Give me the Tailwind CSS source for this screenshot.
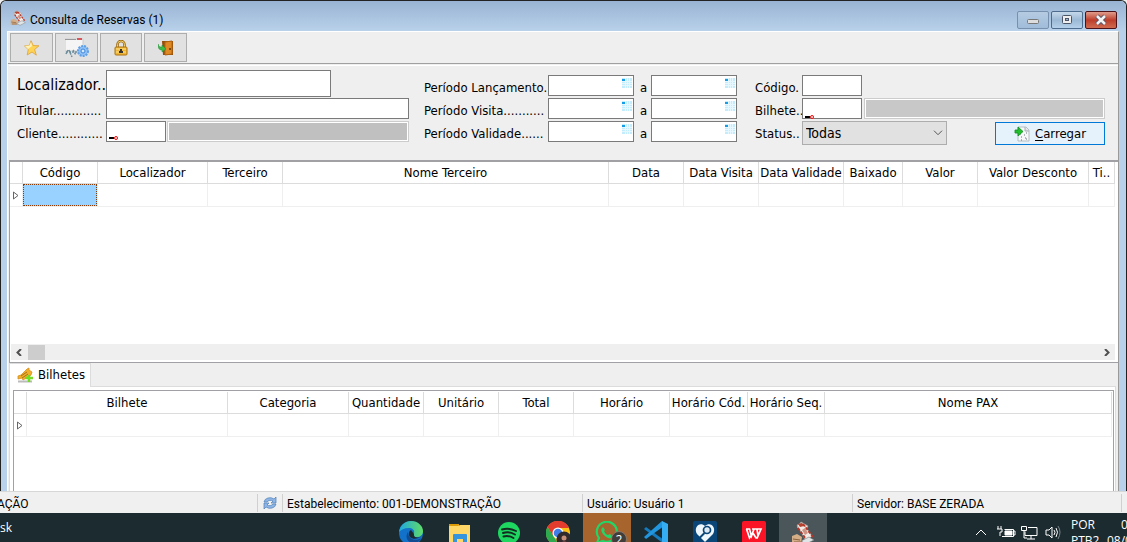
<!DOCTYPE html>
<html lang="pt-BR">
<head>
<meta charset="utf-8">
<title>Consulta de Reservas</title>
<script src="https://cdn.jsdelivr.net/npm/@tailwindcss/browser@4"></script>
</head>
<body class="flex h-screen flex-col overflow-hidden bg-[#efefef] font-['DejaVu_Sans_Condensed','DejaVu_Sans',sans-serif] text-[13px] text-black">
<svg class="hidden">
  <symbol id="cal" viewBox="0 0 10 10"><path d="M0 0h10v10H0z" fill="#c3ecfc"/><path d="M0 3.500h10M0 5.500h10M0 7.500h10M3.500 0v10M5.500 0v10M7.500 0v10" stroke="#e6f8fe" stroke-width="1"/><path d="M0 1h3v2H0z" fill="#149de8"/></symbol>
  <symbol id="tickets" viewBox="0 0 24 24"><path d="m6 6 4-5 7 4-4 8z" fill="#eee2d8" stroke="#a79a95" stroke-width=".6"/><path d="m6 4 6-2 9 13-6 5z" fill="#f1ece7" stroke="#a99790" stroke-width=".7"/><path d="m7 3 4-1 2 3-4 1z" fill="#b5422f"/><path d="m12 3 10 13M7 7l8 11" stroke="#b83426" stroke-width="1.800" stroke-dasharray="3 1.500"/><path d="m11 9 3-2 3 5-3 2z" fill="#ce9282"/><path d="m1 15 5-2 5 3-1 6H1z" fill="#d3ae86"/><path d="m2 18 7 1M3 21h8" stroke="#8d6041"/><path d="m10 20 8-4 5 3-8 4z" fill="#dfe4e5" stroke="#7b7776" stroke-width=".6"/></symbol>
  <symbol id="marker" viewBox="0 0 6 9"><path d="M.5 1v7L5 4.500z" fill="white" stroke="#666"/></symbol>
</svg>

<main class="flex min-h-0 flex-1 flex-col rounded-t-md border-x border-t border-[#222] bg-[#b9d1ea] pl-[6px] pr-[7px]">
  <header class="-mr-[7px] -ml-[6px] flex h-[30px] shrink-0 items-center rounded-t-md bg-linear-to-b from-[#98b3d3] to-[#b9d1ea] px-[9px]">
    <svg class="mt-1 size-4"><use href="#tickets"/></svg>
    <h1 class="ml-1 mt-2 flex-1 font-['Roboto'] text-[12px]">Consulta de Reservas (1)</h1>
    <div class="mt-2 flex gap-[2px]">
      <button aria-label="Minimizar" class="flex h-[18px] w-8 items-center justify-center rounded-xs border border-[#7790ad] bg-linear-to-b from-[#b5cbe2] to-[#a0bcd9]"><svg class="h-3 w-3" viewBox="0 0 12 12"><rect x=".5" y="5.500" width="11" height="4" rx="1" fill="#ddd" stroke="#777"/></svg></button>
      <button aria-label="Maximizar" class="flex h-[18px] w-8 items-center justify-center rounded-xs border border-[#4d6b8c] bg-linear-to-b from-[#c5d8ea] via-[#9bb8d5] to-[#b4d0ea]"><svg class="h-3 w-3" viewBox="0 0 12 12"><rect x="1.500" y="1.500" width="9" height="8" rx="1" fill="#eee" stroke="#4d5668"/><rect x="4.500" y="4.500" width="3" height="2" fill="#9db8d5" stroke="#4d5668"/></svg></button>
      <button aria-label="Fechar" class="flex h-[18px] w-8 items-center justify-center rounded-xs border border-[#4c1218] bg-linear-to-b from-[#df9b8c] via-[#bd3d2a] to-[#d06a4f]"><svg class="h-3 w-3" viewBox="0 0 12 12"><path d="m2 2 8 8m0-8-8 8" stroke="#555468" stroke-width="4.500"/><path d="m2 2 8 8m0-8-8 8" stroke="#f4f4f4" stroke-width="2.500"/></svg></button>
    </div>
  </header>

  <div class="flex min-h-0 flex-1 flex-col border-t border-r border-l border-t-white border-l-white border-r-[#9a9a9a] bg-[#efefef]">
    <nav class="flex h-8 shrink-0 gap-[2px] border-b border-[#a0a0a0] px-[2px] pt-px">
      <button aria-label="Favorito" class="flex h-[29px] w-[43px] items-center justify-center border border-[#adadad] bg-[#e1e1e1]"><svg class="size-4" viewBox="0 0 16 16"><path d="m7 .7 2.200 4.800 5.800.3-4.400 3.700 1.700 5.700L8 12l-4.800 3 1.100-5.500L.5 6l5-.7z" fill="#ffd454" stroke="#dda13c" stroke-width=".8"/><path d="m7 2 1 4-4 3-3-3 4.500-.5z" fill="#fff3bd"/></svg></button>
      <button aria-label="Configurar impressão" class="flex h-[29px] w-[43px] items-center justify-center border border-[#adadad] bg-[#e1e1e1]"><svg class="h-5 w-6" viewBox="0 0 24 20"><path d="M0 1h18v12H0z" fill="#f5f5f5" stroke="#ccc"/><path d="M0 1h11v1H0z" fill="#999"/><path d="M12 0h5v2h-5z" fill="#d8575c"/><path d="M1 14h11M3 12l-2 4m7-4 3 5M4 12l3 7" stroke="#6d8f9d" stroke-width="1.500" stroke-dasharray="2 1"/><circle cx="18" cy="13" r="5" fill="#8fc0f6" stroke="#5f9fe6" stroke-width="2" stroke-dasharray="2 1"/><circle cx="18" cy="13" r="2" fill="#d4e9ff" stroke="#3d87d8"/></svg></button>
      <button aria-label="Bloquear" class="flex h-[29px] w-[42px] items-center justify-center border border-[#adadad] bg-[#e1e1e1]"><svg class="size-4" viewBox="0 0 16 16"><path d="M4.500 8V4.500a3.500 3.500 0 0 1 7 0V8" fill="none" stroke="#98640b" stroke-width="2.500"/><path d="M4.500 8V4.500a3.500 3.500 0 0 1 7 0V8" fill="none" stroke="#f5d06b"/><rect x="2" y="7" width="12" height="8" rx="1" fill="#efb63c" stroke="#ab720b"/><path d="M3 9h10M3 12h10" stroke="#ffe180"/><path d="M7 9h2v2h1v2H6v-2h1z" fill="#333"/></svg></button>
      <button aria-label="Sair" class="flex h-[29px] w-[43px] items-center justify-center border border-[#adadad] bg-[#e1e1e1]"><svg class="size-4" viewBox="0 0 16 16"><path d="M4 1h11v14H5z" fill="#91500c"/><path d="m7 2 7-1v13l-7 1z" fill="#df8924" stroke="#b1620e"/><path d="M11 9h2" stroke="#7f4710" stroke-width="2"/><path d="M0 4c1 3 2 3 4 3V5l4 4-4 3v-2C1 10 0 8 0 4z" fill="#3dba47" stroke="#248934" stroke-width=".5"/></svg></button>
    </nav>

    <form class="mt-px ml-px flex h-[97px] shrink-0 border-t border-b-2 border-t-white border-b-[#a0a0a5] pl-2 pr-[13px]">
      <section class="w-[392px] shrink-0 pt-1">
        <div class="flex h-7 items-start"><label for="loc" class="w-[89px] whitespace-nowrap pt-[5px] text-[16px] leading-5">Localizador..</label><input id="loc" class="h-[27px] w-[225px] border border-[#7a7a7a] bg-white px-1"></div>
        <div class="flex h-[23px] items-start"><label for="tit" class="w-[89px] whitespace-nowrap pt-[5px] leading-4">Titular.............</label><input id="tit" class="h-[21px] w-[303px] border border-[#7a7a7a] bg-white px-1"></div>
        <div class="flex h-[23px] items-start"><label for="cli" class="w-[89px] whitespace-nowrap pt-[5px] leading-4">Cliente............</label><div class="relative"><input id="cli" class="block h-[21px] w-[60px] border border-[#7a7a7a] bg-white px-1"><svg class="pointer-events-none absolute bottom-[2px] left-[3px] h-1 w-[9px]" viewBox="0 0 9 4"><path d="M0 1h5v2H0z"/><circle cx="7" cy="2" r="1.500" fill="#fff" stroke="red"/></svg></div><input aria-label="Nome do cliente" disabled class="ml-px h-[21px] w-[242px] border border-[#ccc] bg-[#c0c0c0] outline-1 -outline-offset-2 outline-white"></div>
      </section>
      <section class="ml-[15px] w-[313px] shrink-0 pt-[9px]">
        <div class="flex h-[23px]"><label for="l1" class="w-[124px] whitespace-nowrap pt-[5px] leading-4">Período Lançamento.</label><div class="relative"><input id="l1" class="block h-[21px] w-[86px] border border-[#7a7a7a] bg-white px-1"><svg class="absolute right-[2px] top-[3px] size-[10px]"><use href="#cal"/></svg></div><label for="l2" class="w-[17px] pt-[5px] pl-[6px] leading-4">a</label><div class="relative"><input id="l2" class="block h-[21px] w-[86px] border border-[#7a7a7a] bg-white px-1"><svg class="absolute right-[2px] top-[3px] size-[10px]"><use href="#cal"/></svg></div></div>
        <div class="flex h-[23px]"><label for="v1" class="w-[124px] whitespace-nowrap pt-[5px] leading-4">Período Visita...........</label><div class="relative"><input id="v1" class="block h-[21px] w-[86px] border border-[#7a7a7a] bg-white px-1"><svg class="absolute right-[2px] top-[3px] size-[10px]"><use href="#cal"/></svg></div><label for="v2" class="w-[17px] pt-[5px] pl-[6px] leading-4">a</label><div class="relative"><input id="v2" class="block h-[21px] w-[86px] border border-[#7a7a7a] bg-white px-1"><svg class="absolute right-[2px] top-[3px] size-[10px]"><use href="#cal"/></svg></div></div>
        <div class="flex h-[23px]"><label for="d1" class="w-[124px] whitespace-nowrap pt-[5px] leading-4">Período Validade......</label><div class="relative"><input id="d1" class="block h-[21px] w-[86px] border border-[#7a7a7a] bg-white px-1"><svg class="absolute right-[2px] top-[3px] size-[10px]"><use href="#cal"/></svg></div><label for="d2" class="w-[17px] pt-[5px] pl-[6px] leading-4">a</label><div class="relative"><input id="d2" class="block h-[21px] w-[86px] border border-[#7a7a7a] bg-white px-1"><svg class="absolute right-[2px] top-[3px] size-[10px]"><use href="#cal"/></svg></div></div>
      </section>
      <section class="ml-[18px] min-w-0 flex-1 pt-[9px]">
        <div class="flex h-[23px]"><label for="cod" class="w-[47px] shrink-0 whitespace-nowrap pt-[5px] leading-4">Código.</label><input id="cod" class="h-[21px] w-[60px] border border-[#7a7a7a] bg-white px-1"></div>
        <div class="flex h-[23px]"><label for="bil" class="w-[47px] shrink-0 whitespace-nowrap pt-[5px] leading-4">Bilhete..</label><div class="relative"><input id="bil" class="block h-[21px] w-[60px] border border-[#7a7a7a] bg-white px-1"><svg class="pointer-events-none absolute bottom-[2px] left-[3px] h-1 w-[9px]" viewBox="0 0 9 4"><path d="M0 1h5v2H0z"/><circle cx="7" cy="2" r="1.500" fill="#fff" stroke="red"/></svg></div><input aria-label="Nome do bilhete" disabled class="ml-[2px] h-[21px] min-w-0 flex-1 border border-[#ccc] bg-[#c8c8c8] outline-1 -outline-offset-2 outline-white"></div>
        <div class="flex h-6"><label for="sta" class="w-[47px] shrink-0 whitespace-nowrap pt-[5px] leading-4">Status..</label><div class="relative mr-auto"><select id="sta" class="block h-6 w-[145px] appearance-none border border-[#adadad] bg-[#e1e1e1] px-[3px] text-[14px]"><option>Todas</option></select><svg class="pointer-events-none absolute right-1 top-[9px] h-[6px] w-[10px]" viewBox="0 0 10 6"><path d="m1 .7 4 4 4-4" fill="none" stroke="#555"/></svg></div>
        <button type="button" class="mt-px flex h-[23px] w-[110px] items-center justify-center gap-[5px] border border-[#0078d7] bg-[#e5f1fb] text-[13px]"><svg class="size-4" viewBox="0 0 16 16"><path d="M4 1h8l3 3v11H4z" fill="#f5f7f8" stroke="#b5bdc3"/><path d="M11 1v4h4" fill="#dce2e6" stroke="#a5aeb4"/><path d="M6 8h1m3 1h1m1-2h1M7 11h1m3 1h1m-5 2h1m4-1h1" stroke="#68767d"/><path d="M1 4h3V1l5 4.500L4 10V7H1z" fill="#24bf2e" stroke="#128a20" stroke-width=".8"/></svg><span><u class="underline-offset-2">C</u>arregar</span></button></div>
      </section>
    </form>

    <section class="ml-px flex h-[201px] shrink-0 flex-col border-b border-l border-[#a0a0a5] bg-white pr-[3px]">
      <table class="w-full table-fixed border-separate border-spacing-0">
        <colgroup><col class="w-[13px]"><col class="w-[75px]"><col class="w-[110px]"><col class="w-[75px]"><col><col class="w-[75px]"><col class="w-[75px]"><col class="w-[85px]"><col class="w-[59px]"><col class="w-[75px]"><col class="w-[111px]"><col class="w-[26px]"></colgroup>
        <thead><tr class="h-[22px] whitespace-nowrap *:border-r *:border-b *:border-[#dcdcdc] *:p-0 *:text-center *:font-normal"><th></th><th>Código</th><th>Localizador</th><th>Terceiro</th><th>Nome Terceiro</th><th>Data</th><th>Data Visita</th><th>Data Validade</th><th>Baixado</th><th>Valor</th><th>Valor Desconto</th><th class="border-r-0">Ti..</th></tr></thead>
        <tbody><tr class="h-[23px] *:border-r *:border-b *:border-[#efefef] *:p-0"><td><svg class="ml-[3px] h-[9px] w-[6px]"><use href="#marker"/></svg></td><td><div class="h-[22px] border border-dotted border-[#843c0b] bg-[#99d1ff]"></div></td><td></td><td></td><td></td><td></td><td></td><td></td><td></td><td></td><td></td><td class="border-r-0"></td></tr></tbody>
      </table>
      <div class="mt-auto mb-[2px] ml-px flex h-4 items-center bg-[#efefef] px-1">
        <svg class="h-[7px] w-[7px]" viewBox="0 0 7 7"><path d="M6 0 2.500 3.500 6 7" fill="none" stroke="#505050" stroke-width="2"/></svg>
        <span class="ml-[6px] h-[15px] w-[17px] bg-[#cdcdcd]"></span>
        <svg class="ml-auto h-[7px] w-[7px]" viewBox="0 0 7 7"><path d="m1 0 3.500 3.500L1 7" fill="none" stroke="#505050" stroke-width="2"/></svg>
      </div>
    </section>

    <section class="ml-px flex min-h-0 flex-1 flex-col pr-[2px]">
      <div role="tablist" class="flex h-6 shrink-0"><button role="tab" aria-selected="true" class="flex w-[82px] items-center gap-[5px] border-t border-r border-l border-[#dcdcdc] bg-white pl-[7px] pb-[2px]"><svg class="size-4 shrink-0" viewBox="0 0 16 16"><path d="M1 14.500h14" stroke="#bbb" stroke-width="2"/><path d="m1 9 3-1 6-6 2-1v2l3 2-1 3-8 5-1-2-4 1z" fill="#f0ae2a" stroke="#d99118" stroke-width=".8"/><path d="m4 9 6-4m-5 6 6-4" stroke="#946313" stroke-width=".8"/><path d="M12 8v7m-4-4h8" stroke="#75dc24" stroke-width="2.500"/></svg>Bilhetes</button><span class="flex-1 border-b border-[#dcdcdc]"></span></div>
      <div class="flex min-h-0 flex-1 flex-col border-x border-[#dcdcdc] bg-white pt-[3px] pr-px pl-[3px]">
        <div class="min-h-0 flex-1 overflow-hidden border-x border-t border-[#a0a0a5] pt-px pr-px">
          <table class="w-full table-fixed border-separate border-spacing-0">
            <colgroup><col class="w-[13px]"><col class="w-[201px]"><col class="w-[121px]"><col class="w-[75px]"><col class="w-[75px]"><col class="w-[75px]"><col class="w-[96px]"><col class="w-[78px]"><col class="w-[77px]"><col></colgroup>
            <thead><tr class="h-[22px] whitespace-nowrap *:border-r *:border-b *:border-[#dcdcdc] *:p-0 *:text-center *:font-normal"><th></th><th>Bilhete</th><th>Categoria</th><th>Quantidade</th><th>Unitário</th><th>Total</th><th>Horário</th><th>Horário Cód.</th><th>Horário Seq.</th><th class="border-r-0">Nome PAX</th></tr></thead>
            <tbody><tr class="h-[23px] *:border-r *:border-b *:border-[#efefef] *:p-0"><td><svg class="ml-[3px] h-[9px] w-[6px]"><use href="#marker"/></svg></td><td></td><td></td><td></td><td></td><td></td><td></td><td></td><td></td><td class="border-r-0"></td></tr></tbody>
          </table>
        </div>
      </div>
    </section>
  </div>
</main>

<footer class="flex h-[22px] shrink-0 items-center border-t border-[#d7d7d7] bg-[#f0f0f0] font-['Roboto'] text-[12px] whitespace-nowrap *:h-[18px] *:leading-5">
  <span class="-ml-[3px] w-[261px] border-r border-[#d0d0d0]">AÇÃO</span>
  <span class="flex w-[25px] items-center justify-center border-r border-[#d0d0d0]"><svg class="size-[14px]" viewBox="0 0 14 14"><path d="M1 6a6 5 0 0 1 10-3l2-2v6H8l2-2a4 3 0 0 0-6 1zM13 8a6 5 0 0 1-10 3l-2 2V7h5L4 9a4 3 0 0 0 6-1z" fill="#8fb5e5" stroke="#4f80b9" stroke-width=".7"/></svg></span>
  <span class="w-[300px] border-r border-[#d0d0d0] pl-1">Estabelecimento: 001-DEMONSTRAÇÃO</span>
  <span class="w-[270px] border-r border-[#d0d0d0] pl-1">Usuário: Usuário 1</span>
  <span class="flex-1 border-r border-[#d0d0d0] pl-1">Servidor: BASE ZERADA</span><span class="w-[5px]"></span>
</footer>

<nav aria-label="Barra de tarefas" class="flex h-[29px] shrink-0 items-start overflow-hidden bg-[#1b2b30] font-['Open_Sans'] text-[12px] text-white">
  <span class="w-[387px] pt-[7px] leading-4">sk</span>
  <div class="flex gap-px">
    <button aria-label="Edge" class="flex h-10 w-12 items-center justify-center"><svg class="size-6" viewBox="0 0 24 24"><defs><linearGradient id="eg"><stop stop-color="#1fa7e1"/><stop offset="1" stop-color="#61dc65"/></linearGradient></defs><circle cx="12" cy="12" r="12" fill="#1272c9"/><path d="M0 11C1 4 6 0 12 0c7 0 12 5 12 10 0 4-3 6-6 6-4 0-4-2-3-4 1-3-2-5-5-5-5 0-8 2-10 4z" fill="url(#eg)"/><path d="M9 11c-4 6 1 12 7 11 4-1 6-4 7-5-7 4-14 1-14-6z" fill="#114b92"/><path d="M12 9c-2 1-3 4-1 7 3 3 8 2 12-1-5 3-9 1-8-2z" fill="#1b2b30"/></svg></button>
    <button aria-label="Explorador" class="flex h-10 w-12 items-center justify-center"><svg class="h-6 w-6" viewBox="0 0 24 24"><path d="M1 3h10v4H1z" fill="#dc9b06"/><path d="M1 5h9l2-1h10v18H1z" fill="#ffd766"/><path d="M5 14q0-1 1-1h12q1 0 1 1v10h-4v-6H9v6H5z" fill="#3694dc"/></svg></button>
    <button aria-label="Spotify" class="flex h-10 w-12 items-center justify-center"><svg class="size-[22px]" viewBox="0 0 22 22"><circle cx="11" cy="11" r="11" fill="#1ed760"/><path d="M4 7.500q7-2 14 1.500M5 11q6-2 12 1.500M5.500 14.500q5-1.500 10 1.500" fill="none" stroke="#142b22" stroke-width="1.900" stroke-linecap="round"/></svg></button>
    <button aria-label="Chrome" class="flex h-10 w-12 items-center justify-center"><svg class="size-6" viewBox="0 0 24 24"><circle cx="12" cy="12" r="12" fill="#fbc116"/><path d="M1.500 6A12 12 0 0 1 23 7H12l-5 8z" fill="#e33b2e"/><path d="M1.500 6 8 16l5 8A12 12 0 0 1 1.500 6z" fill="#2da94f"/><circle cx="12" cy="12" r="5.500" fill="#fff"/><circle cx="12" cy="12" r="4.300" fill="#3f7ee8"/><circle cx="18" cy="18" r="7.500" fill="#302a2d"/><circle cx="18" cy="17" r="2.500" fill="#c58f7a"/><path d="M14 24q4-8 9 0" fill="#694043"/></svg></button>
    <button aria-label="WhatsApp" class="relative flex h-10 w-12 items-center justify-center bg-[#a7642d]"><svg class="size-6" viewBox="0 0 24 24"><path d="M2 22 4 17A10 10 0 1 1 8 20z" fill="none" stroke="#24d466" stroke-width="2.200"/><path d="M8 6c-6 4 6 15 10 10l-3-3-2 1q-3-1-4-4l1-1z" fill="#24d466"/></svg><span class="absolute top-[18px] left-[28px] size-4 rounded-full border border-[#8b7868] bg-[#403d3a] text-[12px] leading-4">2</span></button>
    <button aria-label="VS Code" class="flex h-10 w-12 items-center justify-center"><svg class="size-6" viewBox="0 0 24 24"><path d="m0 8 2-2 18 13v4z" fill="#167bbd"/><path d="m0 16 18-16 2 5L2 18z" fill="#2196df"/><path d="m18 0 6 3v18l-6 3z" fill="#35adf2"/></svg></button>
    <button aria-label="Busca de saúde" class="flex h-10 w-12 items-center justify-center"><svg class="size-6" viewBox="0 0 24 24"><rect width="24" height="24" rx="2" fill="#0b4679"/><path d="M12 21 4 13C0 6 7 0 12 5c5-5 12 1 8 8z" fill="#eef7fb"/><circle cx="14" cy="9" r="3.500" fill="#dce9f2" stroke="#0b4679" stroke-width="1.700"/><path d="m11.500 12-5 5" stroke="#0b4679" stroke-width="2"/></svg></button>
    <button aria-label="WPS Office" class="flex h-10 w-12 items-center justify-center"><svg class="size-6" viewBox="0 0 24 24"><rect width="24" height="24" rx="2" fill="#fa1425"/><path d="M4 8h3.500l2 7 2.500-7h3l1 7 3-7H10M4.500 8l3 9 3.500-5 3 5h1l4-9" fill="none" stroke="white" stroke-width="1.700"/></svg></button>
    <button aria-label="Reservas" class="flex h-10 w-12 items-center justify-center bg-[#4a565a]"><svg class="size-6"><use href="#tickets"/></svg></button>
  </div>
  <div class="ml-auto flex h-10 shrink-0 items-center">
    <svg class="h-4 w-[86px]" viewBox="0 0 86 16" fill="none" stroke="white"><path d="m1 10 5-5 5 5"/><path d="M29.500 4.500h9v7H27M39 6h1v4h-1M23 1v3m3-3v3m-4 0h5v3h-2v4"/><path d="M30 6h7v4h-7z" fill="white"/><path d="M53 2.500h9v8H50v-4M56 11v3m-4 0h8M46.500 1.500h5v4h-5zM49 6v7h3"/><path d="M71 5h3l3-3v11l-3-3h-3zM79 5q2 2 0 5m2-7q3 4 0 9"/><path d="M83 1q4 6 0 13" stroke="#7c8588"/></svg>
    <div class="ml-[10px] h-10 w-[35px] pt-1 leading-4"><p>POR</p><p>PTB2</p></div>
    <div class="ml-px h-10 w-[20px] overflow-hidden pt-1 leading-4 whitespace-nowrap"><p class="pl-[14px]">0</p><p>08/0</p></div>
  </div>
</nav>
</body>
</html>
